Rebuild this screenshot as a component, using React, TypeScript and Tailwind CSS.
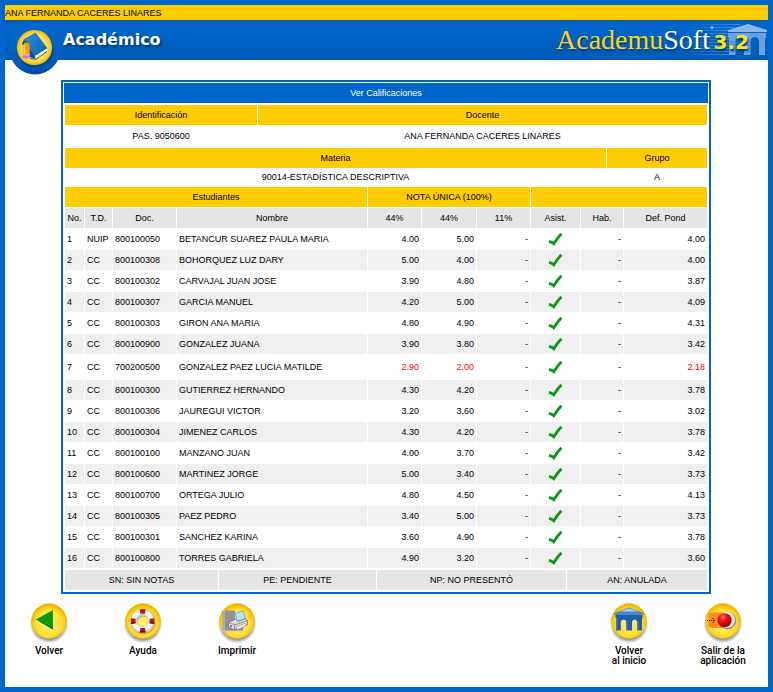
import type { ReactNode } from "react";

type Student = {
  td: string;
  doc: string;
  name: string;
  first: string;
  second: string;
  final: string;
  failed?: boolean;
};

const students: Student[] = [
  { td: "NUIP", doc: "800100050", name: "BETANCUR SUAREZ PAULA MARIA", first: "4.00", second: "5.00", final: "4.00" },
  { td: "CC", doc: "800100308", name: "BOHORQUEZ LUZ DARY", first: "5.00", second: "4.00", final: "4.00" },
  { td: "CC", doc: "800100302", name: "CARVAJAL JUAN JOSE", first: "3.90", second: "4.80", final: "3.87" },
  { td: "CC", doc: "800100307", name: "GARCIA MANUEL", first: "4.20", second: "5.00", final: "4.09" },
  { td: "CC", doc: "800100303", name: "GIRON ANA MARIA", first: "4.80", second: "4.90", final: "4.31" },
  { td: "CC", doc: "800100900", name: "GONZALEZ JUANA", first: "3.90", second: "3.80", final: "3.42" },
  { td: "CC", doc: "700200500", name: "GONZALEZ PAEZ LUCIA MATILDE", first: "2.90", second: "2.00", final: "2.18", failed: true },
  { td: "CC", doc: "800100300", name: "GUTIERREZ HERNANDO", first: "4.30", second: "4.20", final: "3.78" },
  { td: "CC", doc: "800100306", name: "JAUREGUI VICTOR", first: "3.20", second: "3.60", final: "3.02" },
  { td: "CC", doc: "800100304", name: "JIMENEZ CARLOS", first: "4.30", second: "4.20", final: "3.78" },
  { td: "CC", doc: "800100100", name: "MANZANO JUAN", first: "4.00", second: "3.70", final: "3.42" },
  { td: "CC", doc: "800100600", name: "MARTINEZ JORGE", first: "5.00", second: "3.40", final: "3.73" },
  { td: "CC", doc: "800100700", name: "ORTEGA JULIO", first: "4.80", second: "4.50", final: "4.13" },
  { td: "CC", doc: "800100305", name: "PAEZ PEDRO", first: "3.40", second: "5.00", final: "3.73" },
  { td: "CC", doc: "800100301", name: "SANCHEZ KARINA", first: "3.60", second: "4.90", final: "3.78" },
  { td: "CC", doc: "800100800", name: "TORRES GABRIELA", first: "4.90", second: "3.20", final: "3.60" },
];

const tableClass = "w-full table-fixed border-separate border-spacing-px";
const goldHead = "h-5 bg-[#ffcc00] p-0 text-center font-normal";
const greyHead = "h-5 bg-[#e5e5e5] p-0 text-center font-normal";

function Check() {
  return (
    <svg viewBox="0 0 15 14" className="mx-auto block h-[14px] w-[15px]" role="img" aria-label="Asiste">
      <path d="M1 9.4 Q4 10 5.8 11.8 Q9 6.4 13.4 1.8" fill="none" stroke="#0b980f" strokeWidth="2.7" />
    </svg>
  );
}

function Disc({ id, children }: { id: string; children: ReactNode }) {
  return (
    <svg viewBox="0 0 42 42" className="h-[42px] w-[42px] shrink-0" aria-hidden="true">
      <defs>
        <radialGradient id={`${id}-shade`} cx="21" cy="22" r="19.5" gradientUnits="userSpaceOnUse">
          <stop offset="0.78" stopColor="#555" stopOpacity="0.65" />
          <stop offset="1" stopColor="#777" stopOpacity="0" />
        </radialGradient>
        <radialGradient id={`${id}-gold`} cx="0.5" cy="0.55" r="0.5">
          <stop offset="0" stopColor="#fff27a" />
          <stop offset="0.7" stopColor="#ffe23c" />
          <stop offset="0.9" stopColor="#fccb0a" />
          <stop offset="1" stopColor="#efb700" />
        </radialGradient>
      </defs>
      <circle cx="21" cy="22" r="19.5" fill={`url(#${id}-shade)`} />
      <circle cx="21" cy="19" r="17.7" fill={`url(#${id}-gold)`} />
      {children}
    </svg>
  );
}

function BackIcon() {
  return (
    <Disc id="back">
      <path d="M8 17.5 L25 8 V27.5 Z" fill="#089a08" />
      <path d="M8 17.5 L25 27.5 V25.5 Z" fill="#067806" />
    </Disc>
  );
}

function HelpIcon() {
  return (
    <Disc id="help">
      <circle cx="21.3" cy="20" r="9" fill="none" stroke="#a28b3c" strokeWidth="7" opacity="0.6" />
      <circle cx="20.6" cy="19" r="8.7" fill="none" stroke="#c9c9d2" strokeWidth="6.8" />
      <circle cx="20.2" cy="18.5" r="8.7" fill="none" stroke="#f5f5f8" strokeWidth="4.4" />
      <g fill="#c1121c">
        <path d="M17.8 7.2 H23.6 L23 11.8 H18.4 Z" />
        <path d="M18.4 26 H23 L23.6 30.6 H17.8 Z" />
        <path d="M8.9 16.2 L13.6 16.8 V21.3 L8.9 21.9 Z" />
        <path d="M27.6 16.8 L32.3 16.2 V21.9 L27.6 21.3 Z" />
      </g>
      <path d="M17.8 30.6 H23.6 L23.3 28.8 H18 Z M8.9 21.9 L13.6 21.3 V20 L8.9 20.4 Z M27.6 21.3 L32.3 21.9 V20.4 L27.6 20 Z" fill="#7d0a12" />
    </Disc>
  );
}

function PrinterIcon() {
  return (
    <Disc id="print">
      <path d="M6.5 8.5 H19 V21 H27 V29 H6.5 Z" fill="#929294" />
      <path d="M8 8.5 V29" stroke="#fff" strokeWidth="1" strokeDasharray="1 1" />
      <path d="M6.5 29 H27" stroke="#c9c9c9" strokeWidth="1" />
      <path d="M19 11.5 L27.2 8.8 L29.2 17 L21.5 19.5 Z" fill="#b5e3fb" stroke="#5b9cc4" strokeWidth="0.7" />
      <path d="M12.5 20.5 L19.5 17 L22 19.4 L29.2 16.6 L31.5 18.5 V22.5 L18.5 28 L12.5 25 Z" fill="#dcdcde" stroke="#606068" strokeWidth="0.7" />
      <path d="M12.5 20.5 L18.8 23 L31.5 18.5 M18.8 23 L18.5 28" fill="none" stroke="#707078" strokeWidth="0.7" />
      <path d="M19.5 25.8 L29 21.5 L31 22.8 L22 27.4 Z" fill="#fff" stroke="#707078" strokeWidth="0.5" />
      <circle cx="15" cy="24" r="0.9" fill="#c7261f" />
    </Disc>
  );
}

function HomeIcon() {
  return (
    <Disc id="home">
      <path d="M6.5 11 L21 5.4 L35.5 11 V13 H6.5 Z" fill="#4e87c9" />
      <path d="M12 9.6 L21 6.2 L30 9.6 Z" fill="#a8cdee" />
      <path d="M7.5 13 H34.5 V16 H34 V28.5 H29.2 V20 Q29 17.5 26.8 17.5 Q24.2 17.5 24 20 V28.5 H18.2 V20 Q18 17.5 15.6 17.5 Q13 17.5 12.8 20 V28.5 H8 V16 H7.5 Z" fill="#205daf" />
      <path d="M8.8 16 V28 M19 19 V28 M30 19 V28" stroke="#4e87c9" strokeWidth="1" />
    </Disc>
  );
}

function ExitIcon() {
  return (
    <Disc id="exit">
      <defs>
        <radialGradient id="exit-ball" cx="0.4" cy="0.3" r="0.7">
          <stop offset="0" stopColor="#ff7a70" />
          <stop offset="0.4" stopColor="#ee1111" />
          <stop offset="1" stopColor="#a80000" />
        </radialGradient>
      </defs>
      <path d="M7 11.5 Q9 10.5 11 10.5 H22 V26 H11 Q8 26 6 23.5 Z" fill="#ff8b1e" />
      <circle cx="25.6" cy="18.7" r="8.6" fill="#8f8f94" />
      <circle cx="25" cy="18" r="8" fill="#e4e4e8" />
      <circle cx="22.6" cy="18.2" r="7" fill="url(#exit-ball)" />
      <path d="M5 18.5 H12" stroke="#222" strokeWidth="1" strokeDasharray="1 1" />
      <path d="M10.3 16 L12.8 18.5 L10.3 21" fill="none" stroke="#222" strokeWidth="1" strokeDasharray="1.4 0.6" />
    </Disc>
  );
}

function SectionBadge() {
  return (
    <svg viewBox="0 0 60 60" className="h-[60px] w-[60px]" aria-hidden="true">
      <defs>
        <linearGradient id="badge-ring" x1="0" y1="0" x2="0" y2="1">
          <stop offset="0.3" stopColor="#0066cc" />
          <stop offset="0.85" stopColor="#0059b3" />
          <stop offset="1" stopColor="#004a96" />
        </linearGradient>
        <radialGradient id="badge-gold" cx="0.5" cy="0.5" r="0.5">
          <stop offset="0" stopColor="#fff6a8" />
          <stop offset="0.75" stopColor="#ffe04a" />
          <stop offset="1" stopColor="#f0b90c" />
        </radialGradient>
        <linearGradient id="badge-book" x1="0" y1="0" x2="1" y2="1">
          <stop offset="0" stopColor="#2b93e0" />
          <stop offset="1" stopColor="#0a62b4" />
        </linearGradient>
      </defs>
      <circle cx="30" cy="29" r="25.5" fill="url(#badge-ring)" />
      <circle cx="30.5" cy="29.5" r="18.6" fill="#00427f" opacity="0.5" />
      <circle cx="29.5" cy="27.5" r="17.6" fill="url(#badge-gold)" />
      <path d="M19 19 L30.5 12.6 L42.5 28.3 L30 36 Z" fill="url(#badge-book)" />
      <path d="M30 36 L42.5 28.3 L41.6 31.8 L31 38.8 L25 38 Z" fill="#f4f8fc" />
      <path d="M19 19 L30 36 L30.5 39 L25 37 L17 24 Z" fill="#0a4a90" />
      <path d="M25 38.5 L31 39.3 L42 31.5" fill="none" stroke="#0b4a90" strokeWidth="0.9" />
      <path d="M17.8 25 L21.2 20 L24.8 25 V34 H17.8 Z" fill="#f79a16" />
      <path d="M19.4 22.8 L21.2 20 L23.1 22.8 Z" fill="#5a4630" />
      <path d="M19.5 25 V34" stroke="#ffd83c" strokeWidth="1.8" />
      <path d="M17.8 34 H25 V35.5 H17.8 Z" fill="#b8b8c8" />
      <path d="M17.8 35.5 H25 V37.6 Q21.4 39.4 17.8 37.6 Z" fill="#f069c8" />
    </svg>
  );
}

function LogoBackdrop() {
  return (
    <svg viewBox="0 0 100 40" className="absolute top-0 right-0 h-10 w-[100px]" aria-hidden="true">
      <defs>
        <linearGradient id="logo-lines" x1="0" y1="0" x2="1" y2="0">
          <stop offset="0" stopColor="#8db8ea" stopOpacity="0" />
          <stop offset="1" stopColor="#8db8ea" stopOpacity="0.5" />
        </linearGradient>
      </defs>
      <g fill="url(#logo-lines)">
        <rect x="22" y="4" width="50" height="1" />
        <rect x="22" y="7" width="44" height="1" />
        <rect x="18" y="10" width="42" height="1" />
        <rect x="18" y="13" width="42" height="1" />
        <rect x="14" y="16" width="50" height="1" />
        <rect x="14" y="19" width="50" height="1" />
        <rect x="10" y="22" width="54" height="1" />
        <rect x="10" y="25" width="54" height="1" />
        <rect x="10" y="28" width="54" height="1" />
        <rect x="10" y="31" width="54" height="1" />
        <rect x="10" y="34" width="54" height="1" />
      </g>
      <path d="M60 10 L80 4 L99 10 V12 H60 Z" fill="#9dc0ec" opacity="0.9" />
      <path d="M60 13 H98 V18 H97 V35 H91 V21 Q90.5 17 87 17 Q83 17 82.5 21 V35 H76 V21 Q75.5 17 71.5 17 Q68 17 67.5 21 V35 H61 V18 H60 Z" fill="#7fabe2" opacity="0.85" />
      <path d="M61 22 H67 M61 25 H67 M61 28 H67 M61 31 H67 M76 25 H82 M76 28 H82 M76 31 H82" stroke="#3f82d4" strokeWidth="1" />
    </svg>
  );
}

function Action({ label, children }: { label: ReactNode; children: ReactNode }) {
  return (
    <button
      type="button"
      className="flex w-[54px] cursor-pointer flex-col items-center gap-0.5 text-center font-[Roboto,sans-serif] text-[10px] leading-[10px] font-medium text-black"
    >
      {children}
      <span className="whitespace-nowrap">{label}</span>
    </button>
  );
}

export default function App() {
  return (
    <div className="flex min-h-screen flex-col border-5 border-[#0066cc] bg-white font-['Liberation_Sans',Arial,sans-serif] text-[9px] leading-3 text-black">
      <div className="h-[15px] bg-[#ffcc00] pt-0.5">ANA FERNANDA CACERES LINARES</div>

      <header className="relative flex h-10 justify-between bg-linear-to-b from-[#0057b0] via-[#0066cc] via-15% to-[#005bb6]">
        <div className="absolute top-0 left-0">
          <SectionBadge />
        </div>
        <h1 className="pt-2 pl-[58px] font-['DejaVu_Sans',Verdana,sans-serif] text-base leading-6 font-bold text-white text-shadow-[2px_2px_2px_#003a78]">
          Académico
        </h1>
        <div className="relative flex w-[212px] items-baseline whitespace-nowrap">
          <LogoBackdrop />
          <span className="relative font-['Liberation_Serif',serif] text-[28px] leading-10 text-[#ffd21c] text-shadow-[1px_2px_2px_#003a78]">
            Academu<span className="text-white">Soft</span>
          </span>
          <span className="relative self-start pt-1 text-[9px] leading-3 text-white">°</span>
          <span className="relative font-['DejaVu_Sans',Verdana,sans-serif] text-[20px] leading-10 font-bold text-[#ffe20a] text-shadow-[1px_2px_2px_#003a78]">
            3.2
          </span>
        </div>
      </header>

      <main className="mt-5 mr-[57px] ml-14 border-2 border-[#0066cc] p-px">
        <h2 className="mb-px h-5 bg-[#0066cc] text-center leading-5 text-white">Ver Calificaciones</h2>

        <table className={tableClass}>
          <thead>
            <tr>
              <th className={`${goldHead} w-[192px]`}>Identificación</th>
              <th className={goldHead}>Docente</th>
            </tr>
          </thead>
          <tbody>
            <tr className="text-center">
              <td className="h-5 p-0">PAS. 9050600</td>
              <td className="h-5 p-0">ANA FERNANDA CACERES LINARES</td>
            </tr>
          </tbody>
        </table>

        <table className={tableClass}>
          <thead>
            <tr>
              <th className={goldHead}>Materia</th>
              <th className={`${goldHead} w-[100px]`}>Grupo</th>
            </tr>
          </thead>
          <tbody>
            <tr className="text-center">
              <td className="h-4 p-0">90014-ESTADÍSTICA DESCRIPTIVA</td>
              <td className="h-4 p-0">A</td>
            </tr>
          </tbody>
        </table>

        <table className={tableClass}>
          <colgroup>
            <col className="w-[19px]" />
            <col className="w-[27px]" />
            <col className="w-[63px]" />
            <col />
            <col className="w-[53px]" />
            <col className="w-[54px]" />
            <col className="w-[53px]" />
            <col className="w-[49px]" />
            <col className="w-[42px]" />
            <col className="w-[83px]" />
          </colgroup>
          <thead>
            <tr>
              <th colSpan={4} className={goldHead}>Estudiantes</th>
              <th colSpan={3} className={goldHead}>NOTA ÚNICA (100%)</th>
              <td colSpan={3} className={goldHead} />
            </tr>
            <tr>
              <th className={greyHead}>No.</th>
              <th className={greyHead}>T.D.</th>
              <th className={greyHead}>Doc.</th>
              <th className={greyHead}>Nombre</th>
              <th className={greyHead}>44%</th>
              <th className={greyHead}>44%</th>
              <th className={greyHead}>11%</th>
              <th className={greyHead}>Asist.</th>
              <th className={greyHead}>Hab.</th>
              <th className={greyHead}>Def. Pond</th>
            </tr>
          </thead>
          <tbody>
            {students.map((s, i) => {
              const cell = `px-0.5 py-0 ${s.failed ? "h-6" : "h-5"} ${i % 2 === 1 ? "bg-[#efefef]" : "bg-white"}`;
              const grade = `${cell} text-right ${s.failed ? "text-[#ff0000]" : ""}`;
              return (
                <tr key={s.doc}>
                  <td className={cell}>{i + 1}</td>
                  <td className={cell}>{s.td}</td>
                  <td className={cell}>{s.doc}</td>
                  <td className={cell}>{s.name}</td>
                  <td className={grade}>{s.first}</td>
                  <td className={grade}>{s.second}</td>
                  <td className={`${cell} text-right`}>-</td>
                  <td className={cell}>
                    <Check />
                  </td>
                  <td className={`${cell} text-right`}>-</td>
                  <td className={grade}>{s.final}</td>
                </tr>
              );
            })}
          </tbody>
        </table>

        <table className={tableClass}>
          <tbody>
            <tr>
              <td className={`${greyHead} w-[153px]`}>SN: SIN NOTAS</td>
              <td className={`${greyHead} w-[157px]`}>PE: PENDIENTE</td>
              <td className={greyHead}>NP: NO PRESENTÓ</td>
              <td className={`${greyHead} w-[140px]`}>AN: ANULADA</td>
            </tr>
          </tbody>
        </table>
      </main>

      <footer className="flex items-start justify-between pt-2 pr-[18px] pb-5 pl-[17px]">
        <nav className="flex gap-10">
          <Action label="Volver">
            <BackIcon />
          </Action>
          <Action label="Ayuda">
            <HelpIcon />
          </Action>
          <Action label="Imprimir">
            <PrinterIcon />
          </Action>
        </nav>
        <nav className="flex gap-10">
          <Action
            label={
              <>
                Volver
                <br />
                al inicio
              </>
            }
          >
            <HomeIcon />
          </Action>
          <Action
            label={
              <>
                Salir de la
                <br />
                aplicación
              </>
            }
          >
            <ExitIcon />
          </Action>
        </nav>
      </footer>
    </div>
  );
}
